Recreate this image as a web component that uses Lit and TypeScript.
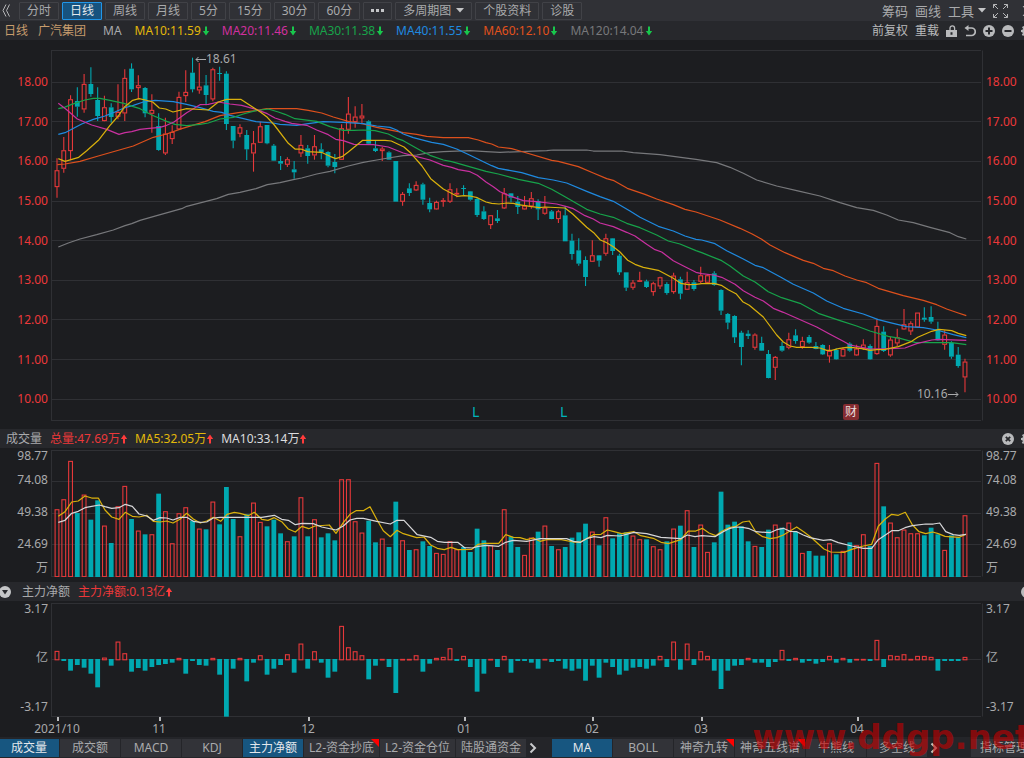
import { LitElement, html, svg, css, nothing } from "lit";
import { customElement, property, state } from "lit/decorators.js";

/* Chart data is kept on a grid of three units per pixel; every block carries its own origin. */
const UNIT = 3;
const FIRST_X = 57;
const STEP = 6.776;
const PLOT_LEFT = 51;
const PLOT_WIDTH = 932;

type Candle = { hi: number; top: number; bot: number; lo: number; up: boolean };
type Block = [number, string];
type LineBlock = [number, number, string];

/* Each entry: high,top,bottom,low followed by r (rising) or g (falling). */
const CANDLE_BLOCKS: Block[] = [
  [40, `355,391,441,473r 291,331,386,398r 166,178,333,361r 142,183,200,230g 102,132,208,218r 82,132,162,170g
    142,180,228,243g 167,202,243,244r 190,202,231,248g 133,216,230,238r 88,114,220,243r 70,86,148,156g
    106,136,144,178r 141,144,220,232g 163,210,221,278r 220,258,330,332g 233,281,340,345r 256,276,297,312r
    155,171,268,270r 91,156,168,186r 53,98,148,157g 69,140,151,161r 105,136,165,196g 83,88,178,184r
    80,99,101,122g 94,101,252,270g 258,258,302,325g 253,262,281,292r 270,285,328,360g 273,310,340,395r`],
  [80, `125,139,188,188r 135,135,190,193g 192,197,242,243g 228,243,251,270g 232,238,254,261r 243,268,277,296g
    165,195,220,231r 195,205,228,251g 165,199,226,239r 190,208,217,238g 214,216,257,262g 222,246,261,280g
    133,145,239,240r 51,101,149,161r 79,110,126,143r 72,107,115,130r 121,124,191,194g 180,205,213,216g
    201,206,213,243r 214,217,239,240g 243,243,365,365g 336,342,365,377r 310,325,339,348g 304,315,331,333r
    308,313,359,374g 353,369,388,397g 362,366,388,389r 354,361,365,380r 310,328,365,369r 325,339,342,352r
    316,324,326,345g 333,334,359,362g 353,357,405,411g`],
  [130, `229,244,267,270g 255,256,285,297r 240,265,273,279g 174,190,235,237r 189,190,203,217g 198,215,231,252g
    198,227,238,239r 186,205,229,236r 208,213,238,270g 198,233,251,254r 240,244,267,268g 239,244,267,279r
    228,256,334,334g 311,332,372,389g 325,361,401,407g 379,390,441,468g 331,376,395,396r 375,376,392,410g
    311,325,371,377r 324,325,363,375g 371,377,427,435g 427,427,473,483g 450,458,473,479r 425,451,455,456r
    449,454,471,474g 455,460,486,497r 440,442,469,477r 457,462,489,494g 428,437,486,491r 440,448,491,508g
    425,457,479,480r 450,457,477,482g`],
  [220, `140,166,185,190r 162,166,188,190r 154,160,195,197g 208,210,272,285g 279,282,308,328g 286,288,352,369g
    332,338,381,436g 331,341,348,357g 340,344,383,389r 350,369,392,393g 390,402,474,475g 408,411,443,480r
    366,378,392,395g 338,358,383,388r 328,346,363,371g 350,363,381,386r 345,351,368,371g 366,378,387,388g
    373,375,403,405g 375,393,409,428r 385,390,418,419g 382,387,409,410r 367,371,392,395g 374,386,406,407r
    358,374,386,390r 373,378,418,419g 298,318,402,404r 319,335,393,396g 350,359,406,410r 326,352,370,379r
    267,313,328,329r 304,310,334,345r 278,278,322,323r 262,293,299,305g 259,291,305,311g 305,328,361,362g
    331,344,374,389r 364,369,410,416g 381,404,438,443g 416,425,472,517r`],
];

const CANDLES: Candle[] = CANDLE_BLOCKS.flatMap(([oy, rows]) =>
  rows.trim().split(/\s+/).map((row) => {
    const [hi, top, bot, lo] = row.slice(0, -1).split(",").map((v) => oy + Number(v) / UNIT);
    return { hi, top, bot, lo, up: row.endsWith("r") };
  }),
);

const VOLUME_TOPS = `253 223 108 264 209 284 226 302 354 244 183 282 317 328 328 206 259 355 265 247 287 311 313 230
  298 186 282 334 268 233 291 304 284 325 349 334 217 334 283 337 325 346 163 163 289 323 287 352 341 366 230 346
  375 373 349 363 384 387 349 373 366 381 311 346 361 375 253 335 366 390 338 320 302 363 373 366 338 322 296 320
  361 277 340 325 322 332 343 343 364 373 349 311 302 256 366 299 381 352 200 299 290 304 349 363 366 314 299 308
  293 320 384 378 392 392 355 388 378 352 361 328 363 114 244 293 337 314 325 325 331 308 328 375 331 337 271`
  .split(/\s+/).map(Number);

const FLOW_ENDS = `214 243 272 255 263 281 322 234 257 186 221 275 264 272 261 255 252 248 235 281 243 255 257 235 284
  410 266 235 304 248 227 284 266 255 224 278 192 266 215 248 293 275 139 203 215 227 298 257 238 261 339 238 238
  227 275 251 235 232 206 243 229 261 335 281 238 261 229 278 243 243 248 266 238 246 243 266 272 266 302 257 293
  248 261 284 272 263 261 266 257 229 261 186 269 192 255 215 229 272 327 272 257 255 235 248 248 261 246 211 243
  235 248 243 251 246 229 248 235 248 238 238 243 181 261 227 229 224 238 229 229 232 272 243 243 243 232`
  .split(/\s+/).map(Number);

const PRICE_LINES: { name: string; blocks: LineBlock[] }[] = [
  { name: "gray", blocks: [
    [0, 40, "175,621 205,609 240,597 290,584 340,570 375,557 395,551 420,541 470,527 545,506 560,499 650,476 685,463 720,457"],
    [230, 80, "78,326 112,314 150,308 190,299 215,294 260,282 300,274 355,258 400,247 440,240 475,234 520,227 560,225 600,218 640,215 720,212"],
    [440, 130, "138,65 180,67 320,62 340,60 440,60 460,63 545,63 580,68 660,74 700,79"],
    [640, 220, "168,-182 230,-172 270,-158 310,-140 350,-120 410,-102 470,-88 540,-72 600,-52 650,-37 700,-29 740,-15 775,0 820,8 870,22 930,38 955,50 979,57"],
  ] },
  { name: "orange", blocks: [
    [0, 40, "172,374 195,372 240,364 295,348 400,318 460,292 500,282 545,266 615,245 660,227 715,218"],
    [230, 80, "78,92 110,86 200,86 235,91 275,99 310,111 355,124 400,132 440,142 520,158 560,163 590,169 640,173 715,173 745,180"],
    [440, 130, "138,38 155,42 175,51 215,56 240,63 335,91 355,94 415,110 460,129 500,146 522,152 562,175 615,193 650,207 700,224 735,238"],
    [640, 220, "168,-24 240,0 300,25 335,41 365,58 390,75 435,98 490,121 520,130 550,145 580,152 615,168 650,180 680,188 715,205 790,227 850,241 890,254 920,267 955,279 979,287"],
  ] },
  { name: "blue", blocks: [
    [0, 40, "175,283 195,278 245,252 280,238 315,228 340,218 372,204 400,196 430,186 465,181 520,185 560,193 600,203 640,214 665,217 690,226 715,232"],
    [230, 80, "78,125 130,129 150,133 200,136 235,131 280,125 340,127 400,131 440,138 480,142 500,150 520,162 550,173 605,187 640,193 680,207 720,226"],
    [440, 130, "138,99 155,107 175,115 245,128 295,143 340,150 380,159 440,184 480,200 520,214 570,243 600,262 655,289 700,303 735,318"],
    [640, 220, "168,58 185,60 225,71 260,92 310,117 345,136 370,143 420,170 460,193 520,219 560,243 610,265 670,282 715,299 750,308 800,320 850,323 890,330 940,344 979,353"],
  ] },
  { name: "green", blocks: [
    [0, 40, "175,206 193,202 215,193 255,180 280,175 300,175 330,181 372,190 400,200 420,206 455,225 500,244 525,253 560,257 600,253 625,249 660,237 700,232 730,222"],
    [230, 80, "78,92 115,87 145,96 165,103 195,116 260,124 300,140 340,151 372,151 400,150 435,152 475,162 500,175 520,182 580,216 600,226 640,240 665,245"],
    [440, 130, "138,124 175,132 235,148 295,160 335,178 375,200 440,238 480,252 520,262 560,280 600,293 650,315 685,333 720,342"],
    [640, 220, "168,92 185,98 245,122 270,138 310,168 345,186 385,215 425,233 480,250 535,280 600,302 650,318 690,333 745,349 780,355 825,367 870,368 935,368 979,374"],
  ] },
  { name: "magenta", blocks: [
    [0, 40, "175,190 200,209 232,237 275,255 320,268 357,283 375,278 395,275 420,268 440,266 480,262 500,256 522,246 560,218 600,194 625,193 655,186"],
    [230, 80, "0,72 35,76 78,88 112,101 135,114 165,124 185,130 230,136 260,150 295,164 317,178 340,182 372,193 430,194 475,201 520,219 545,226 600,240 640,256 665,262 685,269 720,275 742,286"],
    [440, 130, "138,156 160,170 180,185 215,200 250,212 290,215 350,222 380,230 400,236 435,257 460,267 480,279 520,290 560,307 585,318 620,343 645,359 665,366 700,392 735,410"],
    [640, 220, "168,157 185,161 220,165 245,172 285,193 310,212 345,232 370,243 400,265 430,277 530,321 570,343 610,364 630,375 665,382 690,387 750,386 795,384 830,371 875,360 895,358 979,361"],
  ] },
  { name: "yellow", blocks: [
    [0, 40, "175,356 195,364 236,352 260,332 297,299 330,256 355,228 374,200 398,181 417,176 436,180 458,186 478,204 497,207 519,216 560,206 625,210 655,186 680,178 722,178"],
    [230, 80, "78,88 92,97 112,112 133,135 175,190 195,207 213,207 233,215 274,217 300,229 317,236 338,229 355,216 398,181 465,181 484,183 522,201 543,220 576,258 602,296 640,327 681,349 703,347 720,348 742,353"],
    [440, 130, "138,216 155,220 177,222 200,219 220,220 235,224 275,230 298,233 315,231 375,234 398,252 440,292 461,308 481,330 500,338 520,350 540,366 563,391 585,403 610,412 655,421 700,445 722,460 745,464"],
    [640, 220, "168,193 185,191 222,190 244,196 265,209 288,221 308,245 328,256 370,291 390,318 410,345 430,366 450,378 470,382 515,382 540,384 560,391 575,391 595,386 620,382 640,383 665,386 690,391 710,389 735,388 775,380 815,364 833,352 875,334 897,328 935,332 955,340 979,347"],
  ] },
];

const VOLUME_LINES: { name: string; blocks: LineBlock[] }[] = [
  { name: "yellow", blocks: [
    [0, 425, "175,274 195,260 215,231 235,228 255,213 275,219 295,219 315,255 335,276 357,283 376,262 397,274 417,276 440,271 460,289 480,291 500,288 519,294 540,283 560,265 580,282 601,294 620,288 640,277 662,289 681,268 703,262 720,265 745,272 763,262 785,283 804,286 823,278 845,290 865,312 886,321 906,304 926,311 945,303 988,300 1008,325 1030,293"],
    [340, 425, "30,268 48,257 70,257 90,245 110,283 130,317 151,335 171,316 190,326 230,338 252,336 272,360 292,370 313,374 333,367 353,374 395,373 415,358 435,355 476,355 497,329 520,337 540,338 560,344 580,339 600,349 620,344 660,343 700,351 720,351 740,341 760,329 783,328 802,315 822,320 845,326 882,320 902,332 940,340 963,352 985,356 1022,344"],
    [680, 425, "25,318 47,318 67,310 87,324 107,332 127,318 147,308 168,304 188,291 208,288 228,322 248,335 270,341 290,338 310,330 330,318 350,306 372,321 392,336 412,354 432,372 452,381 492,382 515,373 550,363 575,358 595,304 615,283 635,268 655,271 676,262 697,299 717,320 737,326 758,321 775,326 795,334 838,337 858,328"],
  ] },
  { name: "white", blocks: [
    [0, 425, "175,292 195,286 215,265 235,259 255,248 275,244 298,240 315,245 335,250 357,248 376,238 397,244 417,267 440,273 460,286 480,278 500,279 519,285 540,277 560,277 580,289 601,292 620,291 640,279 660,277 785,277 823,271 845,283 865,286 886,299 906,295 940,296 965,306 1008,315 1030,303"],
    [340, 425, "30,285 50,280 70,280 110,289 151,297 171,286 192,286 212,308 232,329 272,337 292,349 313,352 353,352 374,368 397,369 415,364 440,361 476,364 497,352 520,346 560,349 600,341 680,341 700,349 722,352 742,340 762,335 783,338 802,331 840,333 882,322 920,326 963,337 1022,341"],
    [680, 425, "22,330 45,335 65,332 105,335 127,322 147,311 168,306 188,307 208,311 228,320 270,323 290,314 310,310 330,319 350,320 370,330 390,338 430,346 452,344 475,353 515,363 550,370 575,370 595,344 635,317 655,317 675,308 697,302 737,297 760,297 779,294 797,320 820,329 838,331 858,328"],
  ] },
];

const points = (blocks: LineBlock[]) =>
  blocks
    .flatMap(([ox, oy, list]) =>
      list.split(" ").map((p) => {
        const [x, y] = p.split(",").map(Number);
        return `${(ox + x / UNIT).toFixed(1)},${(oy + y / UNIT).toFixed(1)}`;
      }),
    )
    .join(" ");

const xAt = (i: number) => FIRST_X + STEP * i;

const chartStyles = css`
  :host { display: block; }
  svg { display: block; width: 100%; height: 100%; }
  .grid { stroke: #2f3034; stroke-width: 1; }
  .up { fill: none; stroke: #e6383a; stroke-width: 1.1; }
  .down { fill: #00a8b0; }
  .wick-up { stroke: #e6383a; stroke-width: 1.1; }
  .wick-down { stroke: #00a8b0; stroke-width: 1.1; }
  .line { fill: none; stroke-width: 1.25; stroke-linejoin: round; }
  .yellow { stroke: #d9b00c; }
  .magenta { stroke: #c8309f; }
  .green { stroke: #17a34a; }
  .blue { stroke: #1f8ae0; }
  .orange { stroke: #dd501c; }
  .gray { stroke: #77787b; }
  .white { stroke: #d6d6d8; }
`;

const bar = (i: number, top: number, bottom: number, up: boolean) => {
  const x = xAt(i);
  return up
    ? svg`<rect class="up" x=${x - 1.9} y=${top + 0.4} width="3.8" height=${Math.max(0.6, bottom - top - 0.8)} />`
    : svg`<rect class="down" x=${x - 2.4} y=${top} width="4.8" height=${Math.max(1, bottom - top)} />`;
};

const frame = (top: number, bottom: number, rows: number[]) => svg`
  ${[top, bottom, ...rows].map((y) => svg`<line class="grid" x1="51" x2="981" y1=${y} y2=${y} />`)}
  <line class="grid" x1="51.5" x2="51.5" y1=${top} y2=${bottom} />
  <line class="grid" x1="982.5" x2="982.5" y1=${top} y2=${bottom} />`;

@customElement("price-plot")
export class PricePlot extends LitElement {
  static styles = chartStyles;
  render() {
    return html`<svg viewBox="51 50 932 371" preserveAspectRatio="none" role="img" aria-label="日线">
      ${frame(50.5, 420.5, [82.5, 121.5, 161.5, 201.5, 240.5, 280.5, 319.5, 359.5, 399.5])}
      ${CANDLES.map((c, i) => {
        const x = xAt(i);
        const wick = c.up ? "wick-up" : "wick-down";
        return svg`
          <line class=${wick} x1=${x} x2=${x} y1=${c.hi} y2=${c.top} />
          <line class=${wick} x1=${x} x2=${x} y1=${c.bot} y2=${c.lo} />
          ${bar(i, c.top, c.bot, c.up)}`;
      })}
      ${PRICE_LINES.map((l) => svg`<polyline class="line ${l.name}" points=${points(l.blocks)} />`)}
    </svg>`;
  }
}

@customElement("volume-plot")
export class VolumePlot extends LitElement {
  static styles = chartStyles;
  render() {
    return html`<svg viewBox="51 450 932 127" preserveAspectRatio="none" role="img" aria-label="成交量">
      ${frame(450.5, 576.5, [481.5, 513.5, 544.5])}
      ${VOLUME_TOPS.map((v, i) => bar(i, 425 + v / UNIT, 577, CANDLES[i].up))}
      ${VOLUME_LINES.map((l) => svg`<polyline class="line ${l.name}" points=${points(l.blocks)} />`)}
    </svg>`;
  }
}

@customElement("flow-plot")
export class FlowPlot extends LitElement {
  static styles = chartStyles;
  render() {
    return html`<svg viewBox="51 603 932 114" preserveAspectRatio="none" role="img" aria-label="主力净额">
      ${frame(603.5, 716.5, [659.5])}
      ${FLOW_ENDS.map((v, i) =>
        v < 239 ? bar(i, 580 + (v - 1) / UNIT, 660.2, true) : bar(i, 659, 580 + v / UNIT, false))}
    </svg>`;
  }
}

const arrow = (dir: "up" | "down") => html`<svg class="arrow ${dir}" viewBox="0 0 6 10" aria-hidden="true">
  ${dir === "down"
    ? svg`<path d="M2 0.5h2v4.500H6.200L3 9.500 -0.200 5h2.200z" />`
    : svg`<path d="M2 9.500h2V5H6.200L3 0.500 -0.200 5h2.200z" />`}
</svg>`;

const gear = svg`<path fill="currentColor" fill-rule="evenodd" d="M5 0h2l.3 1.7 1.2.5L10 1.2 11 2.4l-1 1.4.5 1.2 1.5.2v2l-1.6.3-.5 1.1 1 1.4-1.3 1.3-1.4-1-1.1.5L7 12H5l-.3-1.5-1.2-.5-1.4 1-1.3-1.3 1-1.4-.5-1.1L0 7V5l1.5-.2L2 3.6l-1-1.3L2.3 1l1.3 1 1.1-.4zM6 4a2 2 0 100 4 2 2 0 000-4z"/>`;

@customElement("app-root")
export class AppRoot extends LitElement {
  @property() period = "日线";
  @state() private indicator = "主力净额";
  @state() private overlay = "MA";

  static styles = css`
    :host {
      display: block;
      position: relative;
      overflow: hidden;
      min-height: 100vh;
      background: #1c1d20;
      color: #a9aaac;
      font: 12px/16px "Noto Sans", "Noto Sans CJK SC", sans-serif;
      white-space: nowrap;
    }
    button { margin: 0; padding: 0; border: 0; background: none; color: inherit; font: inherit; cursor: pointer; }
    svg { display: block; flex: none; }
    .toolbar, .info, .head, .tabs { display: flex; align-items: center; overflow: hidden; }
    .toolbar { height: 21px; background: #303136; }
    .collapse { width: 19px; padding-left: 2px; }
    .periods { display: flex; gap: 3px; }
    .periods button {
      display: flex; align-items: center; gap: 5px;
      height: 18px; padding: 0 7px;
      border: 1px solid #414247; border-radius: 1px;
      line-height: 16px;
    }
    .periods .on { background: #17537f; border-color: #2196e8; color: #e4e8ec; }
    .spring { flex: 1; }
    .tools { display: flex; align-items: center; flex: none; gap: 7px; font-size: 13px; margin-right: -8px; }
    .tools .menu { display: flex; align-items: center; gap: 4px; }
    .tools .last { margin-left: 7px; }
    .info, .head { height: 19px; background: #27282c; }
    .info { gap: 13px; padding-left: 4px; }
    .stock { color: #c69c6d; }
    .stock span { margin-right: 10px; }
    .name { margin-left: 4px; }
    .val { display: flex; align-items: center; gap: 2px; }
    .head .val { gap: 1px; }
    .arrow { width: 6px; height: 10px; overflow: visible; }
    .arrow.down { fill: #18c74c; }
    .arrow.up { fill: #ff3b3b; }
    .t-yellow { color: #e3b90a; }
    .t-magenta { color: #d0309f; }
    .t-green { color: #17a34a; }
    .t-blue { color: #1f8ae0; }
    .t-orange { color: #e2521c; }
    .t-gray { color: #77787b; }
    .t-red { color: #ec383a; }
    .t-white { color: #dcdcde; }
    .actions { display: flex; align-items: center; flex: none; gap: 7px; margin-right: -9px; color: #b9babc; }
    .head { gap: 8px; padding-left: 6px; }
    .head.fold { padding-left: 0; }
    .head.fold .caption { margin-left: 2px; }
    .chart { display: grid; grid-template-columns: 51px minmax(0, 1fr) 41px; }
    .price { padding: 10px 0 8px; }
    .volume { padding: 2px 0 5px; }
    .flow { padding: 2px 0 0; }
    .plot { position: relative; }
    .price .plot { height: 371px; }
    .volume .plot { height: 127px; }
    .flow .plot { height: 114px; }
    price-plot, volume-plot, flow-plot { height: 100%; }
    .axis { display: flex; flex-direction: column; box-sizing: border-box; padding-right: 3px; text-align: right; }
    .axis.right { padding-left: 3px; padding-right: 0; text-align: left; }
    .price .axis { color: #ec383a; padding-top: 12px; padding-bottom: 2px; }
    .price .axis span { flex: 1; display: flex; align-items: center; justify-content: flex-end; }
    .price .axis.right span { justify-content: flex-start; }
    .volume .axis { line-height: 32px; margin-top: -2px; }
    .volume .axis span:first-child, .volume .axis span:last-child { line-height: 16px; }
    .flow .axis { justify-content: space-between; padding-bottom: 2px; margin-top: -2px; }
    .mark { position: absolute; display: flex; align-items: center; line-height: 16px; }
    .split { color: #00b4bc; font-size: 14px; }
    .report { padding: 0 2px; background: #842c30; border-radius: 2px; color: #eadede; }
    .dates { display: flex; height: 20px; padding-left: 57px; }
    .month { display: flex; flex-direction: column; flex-basis: 0; min-width: 0; }
    .month::before { content: ""; width: 2px; height: 4px; background: #b9babc; }
    .month span { display: flex; justify-content: center; width: 0; }
    .tabs { height: 21px; background: #242529; gap: 1px; }
    .tabs button {
      position: relative; flex: none; box-sizing: border-box;
      min-width: 60px; height: 18px; padding: 0 5px; background: #323338; line-height: 18px;
    }
    .tabs button:first-child { margin-left: -1px; }
    .tabs .on { background: #175680; color: #e4e8ec; }
    .tabs .hot::after {
      content: ""; position: absolute; top: 0; right: 0;
      border-top: 8px solid #ff0000; border-left: 8px solid transparent;
    }
    .tabs .more { display: flex; align-items: center; min-width: 24px; padding: 0 0 0 2px; background: none; color: #c9cacc; }
    .tabs .more.wide { min-width: 42px; }
    .tabs .manage { padding: 0 9px; }
    .watermark {
      position: absolute; right: -7px; bottom: 0;
      color: rgba(200, 0, 0, 0.62);
      font: bold 34px/42px "DejaVu Sans", sans-serif;
      pointer-events: none;
    }
  `;

  private periodButton(label: string) {
    return html`<button class=${label === this.period ? "on" : nothing} @click=${() => (this.period = label)}>${label}</button>`;
  }

  private tab(label: string, current: string, pick: (l: string) => void, hot = false) {
    return html`<button class="${label === current ? "on" : ""} ${hot ? "hot" : ""}" @click=${() => pick(label)}>${label}</button>`;
  }

  private mark(x: number, y: number, cls: string, body: unknown) {
    const left = ((x - PLOT_LEFT) / PLOT_WIDTH) * 100;
    const top = ((y - 50) / 371) * 100;
    return html`<span class="mark ${cls}" style="left:${left}%;top:${top}%">${body}</span>`;
  }

  render() {
    const prices = ["18.00", "17.00", "16.00", "15.00", "14.00", "13.00", "12.00", "11.00", "10.00"];
    const volumes = ["98.77", "74.08", "49.38", "24.69", "万"];
    const flows = ["3.17", "亿", "-3.17"];
    const axis = (rows: string[], side: string) => html`<div class="axis ${side}">${rows.map((r) => html`<span>${r}</span>`)}</div>`;
    const averages = [
      ["MA10:11.59", "yellow"], ["MA20:11.46", "magenta"], ["MA30:11.38", "green"],
      ["MA40:11.55", "blue"], ["MA60:12.10", "orange"], ["MA120:14.04", "gray"],
    ];
    const months: [string, number][] = [
      ["2021/10", 102], ["11", 149], ["12", 156], ["01", 128], ["02", 109], ["03", 156], ["04", 167],
    ];
    const caret = html`<svg width="8" height="5" viewBox="0 0 8 5" aria-hidden="true"><path d="M0 0h8L4 4.6z" fill="#c4c5c7" /></svg>`;
    const chevron = html`<svg width="8" height="12" viewBox="0 0 8 12" aria-hidden="true"><path d="M1.5 1.5L6 6l-4.500 4.500" fill="none" stroke="currentColor" stroke-width="2" /></svg>`;
    const pickIndicator = (l: string) => (this.indicator = l);
    const pickOverlay = (l: string) => (this.overlay = l);

    return html`
      <nav class="toolbar">
        <button class="collapse" aria-label="收起">
          <svg width="8" height="13" viewBox="0 0 8 13"><path d="M4 0.500L1 6.500l3 6M7.500 0.500l-3 6 3 6" fill="none" stroke="#b4b5b7" /></svg>
        </button>
        <div class="periods">
          ${["分时", "日线", "周线", "月线", "5分", "15分", "30分", "60分"].map((p) => this.periodButton(p))}
          <button aria-label="更多周期">
            <svg width="13" height="3" viewBox="0 0 13 3" fill="#c4c5c7"><rect width="3" height="3" /><rect x="5" width="3" height="3" /><rect x="10" width="3" height="3" /></svg>
          </button>
          <button>多周期图 ${caret}</button>
          <button>个股资料</button>
          <button>诊股</button>
        </div>
        <span class="spring"></span>
        <div class="tools">
          <button>筹码</button>
          <button>画线</button>
          <button class="menu">工具 ${caret}</button>
          <button aria-label="全屏">
            <svg width="15" height="14" viewBox="0 0 15 14" fill="none" stroke="#b4b5b7"><path d="M.5 4V.5H4M.5.5L5 5M11 .5h3.500V4M14.500.500L10 5M.5 10v3.500H4M.500 13.500L5 9M11 13.500h3.500V10M14.500 13.500L10 9" /></svg>
          </button>
          <button class="last" aria-label="关闭">
            <svg width="10" height="12" viewBox="0 0 10 12" fill="none" stroke="#b4b5b7"><path d="M1 1l8 10M9 1L1 11" /></svg>
          </button>
        </div>
      </nav>

      <div class="info">
        <span class="stock"><span>日线</span>广汽集团</span>
        <span class="name">MA</span>
        ${averages.map(([t, c]) => html`<span class="val t-${c}">${t}${arrow("down")}</span>`)}
        <span class="spring"></span>
        <div class="actions">
          <button>前复权</button>
          <button>重载</button>
          <button aria-label="锁定">
            <svg width="11" height="12" viewBox="0 0 11 12"><path fill="currentColor" fill-rule="evenodd" d="M0 5h11v7H0zM4.500 7.300v2.400h2V7.300z" /><path d="M4 5V3.200a2.300 2.300 0 014.600 0V5" fill="none" stroke="currentColor" stroke-width="1.300" /></svg>
          </button>
          <button aria-label="撤销">
            <svg width="12" height="12" viewBox="0 0 12 12"><path d="M4.500 0v6L0.500 3z" fill="currentColor" /><path d="M3 3h4.500a3.500 3.500 0 010 7.500H2" fill="none" stroke="currentColor" stroke-width="1.700" /></svg>
          </button>
          <button aria-label="放大">
            <svg width="12" height="12" viewBox="0 0 12 12"><circle cx="6" cy="6" r="6" fill="currentColor" /><path d="M6 2.500v7M2.500 6h7" stroke="#27282c" stroke-width="2" /></svg>
          </button>
          <button aria-label="缩小">
            <svg width="12" height="12" viewBox="0 0 12 12"><circle cx="6" cy="6" r="6" fill="currentColor" /><path d="M2.500 6h7" stroke="#27282c" stroke-width="2" /></svg>
          </button>
          <button aria-label="设置"><svg width="12" height="12" viewBox="0 0 12 12">${gear}</svg></button>
        </div>
      </div>

      <section class="chart price">
        ${axis(prices, "")}
        <div class="plot">
          <price-plot></price-plot>
          ${this.mark(195, 51, "", html`<svg width="11" height="7" viewBox="0 0 11 7" fill="none" stroke="#a9aaac"><path d="M11 3.500H1M3.500 1L1 3.500 3.500 6" /></svg>18.61`)}
          ${this.mark(917, 386, "", html`10.16<svg width="11" height="7" viewBox="0 0 11 7" fill="none" stroke="#a9aaac"><path d="M0 3.500h10M7.500 1L10 3.500 7.500 6" /></svg>`)}
          ${this.mark(472, 404, "split", "L")}
          ${this.mark(560, 404, "split", "L")}
          ${this.mark(843, 404, "report", "财")}
        </div>
        ${axis(prices, "right")}
      </section>

      <header class="head">
        <span>成交量</span>
        <span class="val t-red">总量:47.69万${arrow("up")}</span>
        <span class="val t-yellow">MA5:32.05万${arrow("up")}</span>
        <span class="val t-white">MA10:33.14万${arrow("up")}</span>
        <span class="spring"></span>
        <div class="actions">
          <button aria-label="关闭成交量">
            <svg width="12" height="12" viewBox="0 0 12 12"><circle cx="6" cy="6" r="6" fill="currentColor" /><path d="M3.800 3.800l4.400 4.400M8.200 3.800L3.800 8.200" stroke="#27282c" stroke-width="1.800" /></svg>
          </button>
          <button aria-label="成交量设置"><svg width="12" height="12" viewBox="0 0 12 12">${gear}</svg></button>
        </div>
      </header>
      <section class="chart volume">
        ${axis(volumes, "")}
        <div class="plot"><volume-plot></volume-plot></div>
        ${axis(volumes, "right")}
      </section>

      <header class="head fold">
        <button aria-label="选择指标">
          <svg width="12" height="12" viewBox="0 0 12 12"><circle cx="5" cy="6" r="6" fill="#c4c5c7" /><path d="M2 4h6L5 8.500z" fill="#27282c" /></svg>
        </button>
        <span class="caption">主力净额</span>
        <span class="val t-red">主力净额:0.13亿${arrow("up")}</span>
        <span class="spring"></span>
        <div class="actions">
          <button aria-label="关闭主力净额">
            <svg width="12" height="12" viewBox="0 0 12 12"><circle cx="6" cy="6" r="6" fill="currentColor" /></svg>
          </button>
        </div>
      </header>
      <section class="chart flow">
        ${axis(flows, "")}
        <div class="plot"><flow-plot></flow-plot></div>
        ${axis(flows, "right")}
      </section>
      <div class="dates">
        ${months.map(([m, span]) => html`<div class="month" style="flex-grow:${span}"><span>${m}</span></div>`)}
      </div>

      <footer class="tabs">
        ${this.tab("成交量", "成交量", pickIndicator)}
        ${["成交额", "MACD", "KDJ", "主力净额"].map((t) => this.tab(t, this.indicator, pickIndicator))}
        ${this.tab("L2-资金抄底", this.indicator, pickIndicator, true)}
        ${this.tab("L2-资金仓位", this.indicator, pickIndicator)}
        ${this.tab("陆股通资金", this.indicator, pickIndicator)}
        <button class="more" aria-label="更多指标">${chevron}</button>
        ${["MA", "BOLL"].map((t) => this.tab(t, this.overlay, pickOverlay))}
        ${["神奇九转", "神奇五线谱"].map((t) => this.tab(t, this.overlay, pickOverlay, true))}
        ${["牛熊线", "多空线"].map((t) => this.tab(t, this.overlay, pickOverlay))}
        <button class="more wide" aria-label="更多主图指标">${chevron}</button>
        <button class="manage">指标管理</button>
      </footer>
      <div class="watermark">www.ddgp.net</div>
    `;
  }
}
